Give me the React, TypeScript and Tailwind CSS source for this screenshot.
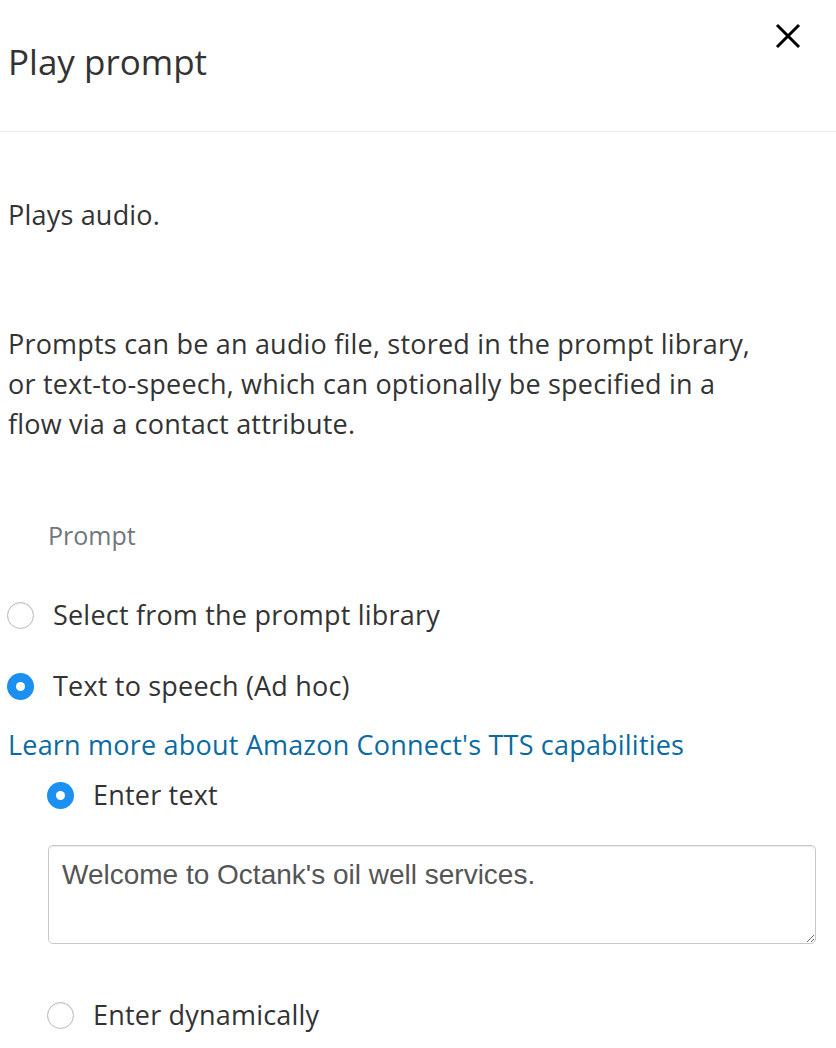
import React from "react";

function Radio({ checked }: { checked?: boolean }) {
  if (checked) {
    return (
      <span className="flex h-[27px] w-[27px] shrink-0 items-center justify-center rounded-full bg-[#1b90f0]">
        <span className="h-[9px] w-[9px] rounded-full bg-white" />
      </span>
    );
  }
  return (
    <span className="h-[27px] w-[27px] shrink-0 rounded-full border border-[#b9b9b9] bg-white shadow-[inset_0_1px_2px_rgba(0,0,0,0.08)]" />
  );
}

export default function App() {
  return (
    <div
      className="min-h-screen w-[836px] bg-white text-[#333]"
      style={{ fontFamily: '"Open Sans", "Noto Sans", sans-serif' }}
    >
      <div className="relative flex h-[132px] items-start border-b border-[#eaeded] pl-2">
        <h1 className="mt-[38px] text-[35px] leading-[48px] font-normal">Play prompt</h1>
        <button className="absolute right-[35px] top-[23px] text-black">
          <svg width="26" height="26" viewBox="0 0 26 26" fill="none" stroke="currentColor" strokeWidth="3">
            <path d="M2 2 L24 24 M24 2 L2 24" />
          </svg>
        </button>
      </div>

      <div className="pl-2 text-[27px] leading-[40px] tracking-[0.2px]">
        <p className="mt-[63px]">Plays audio.</p>
        <p className="mt-[89px] w-[800px]">
          Prompts can be an audio file, stored in the prompt library,
          <br />
          or text-to-speech, which can optionally be specified in a
          <br />
          flow via a contact attribute.
        </p>
      </div>

      <div className="pl-[48px] pt-[71px] text-[25px] leading-[40px] text-[#6f777e]">Prompt</div>

      <div className="mt-[40px] flex items-center gap-[19px] pl-[7px] text-[27px] leading-[40px] tracking-[0.2px]">
        <Radio />
        <span>Select from the prompt library</span>
      </div>
      <div className="mt-[31px] flex items-center gap-[19px] pl-[7px] text-[27px] leading-[40px] tracking-[0.2px]">
        <Radio checked />
        <span>Text to speech (Ad hoc)</span>
      </div>

      <a className="mt-[19px] block pl-2 text-[27px] leading-[40px] tracking-[0.2px] text-[#0a6aa1]">
        Learn more about Amazon Connect's TTS capabilities
      </a>

      <div className="mt-[10px] flex items-center gap-[19px] pl-[47px] text-[27px] leading-[40px] tracking-[0.2px]">
        <Radio checked />
        <span>Enter text</span>
      </div>

      <div className="mt-[30px] pl-[48px] pr-[20px]">
        <textarea
          className="block h-[99px] w-full resize-y rounded-[5px] border border-[#c8c8c8] px-[13px] py-[11px] text-[28px] leading-[36px] text-[#555] shadow-[inset_0_1px_1px_rgba(0,0,0,0.075)] outline-none"
          style={{ fontFamily: '"Liberation Sans", Arial, sans-serif' }}
          defaultValue="Welcome to Octank's oil well services."
        />
      </div>

      <div className="mt-[51px] flex items-center gap-[19px] pl-[47px] text-[27px] leading-[40px] tracking-[0.2px]">
        <Radio />
        <span>Enter dynamically</span>
      </div>
    </div>
  );
}
